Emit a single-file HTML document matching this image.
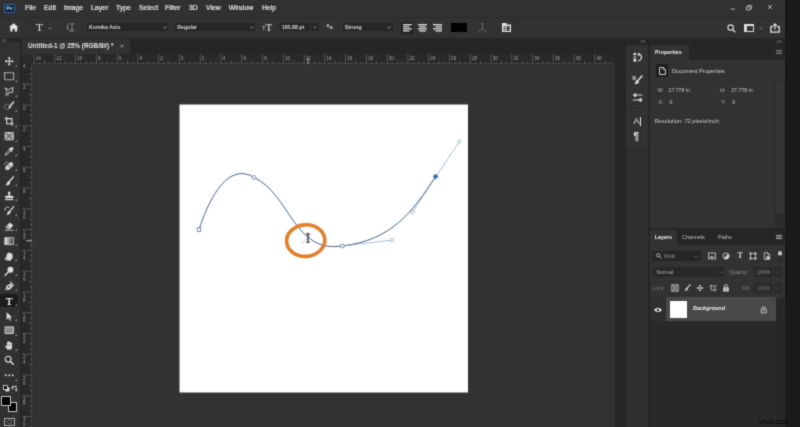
<!DOCTYPE html>
<html><head><meta charset="utf-8"><title>Photoshop</title>
<style>
*{margin:0;padding:0;box-sizing:border-box}
html,body{width:800px;height:427px;overflow:hidden;background:#1a1a1a;font-family:"Liberation Sans",sans-serif;}
#app{position:absolute;left:0;top:0;width:785px;height:427px;background:#262626;overflow:hidden;filter:url(#soft)}
.abs{position:absolute}
svg{position:absolute;overflow:visible}
.t{position:absolute;white-space:nowrap;color:#d2d2d2;line-height:1}
#menubar{left:0;top:0;width:785px;height:17.5px;background:#313132;border-bottom:1px solid #2d2d2d}
#menubar .t{font-size:6.9px;top:5.3px;color:#e2e2e2;-webkit-text-stroke:0.2px #e2e2e2}
#optbar{left:0;top:17.5px;width:785px;height:20px;background:#323232}
.dd{position:absolute;background:#262626;border-radius:1px;height:8.4px;top:5.4px}
.dd .t{font-size:5.3px;top:2.2px;left:2.2px;color:#d4d4d4;font-weight:bold}
.sep{position:absolute;top:3px;width:0.8px;height:14px;background:#2e2e2e}
#toolbar{left:0;top:42.4px;width:20.3px;height:385px;background:#313131}
#tabbar{left:22px;top:38.5px;width:593px;height:15px;background:#262626}
#tab{left:0;top:0;width:108px;height:15px;background:#323232}
#tab .t{font-size:6.4px;font-weight:bold;left:6px;top:4.4px;color:#e4e4e4}
#hruler{left:22px;top:53.5px;width:593px;height:10px;background:#292929;overflow:hidden}
#vruler{left:22px;top:63.5px;width:10px;height:364px;background:#292929;overflow:hidden}
.rl{position:absolute;font-size:4.6px;color:#a0a0a0;line-height:1;white-space:nowrap}
#work{left:32px;top:63.5px;width:583px;height:364px;background:#323232}
#canvas{left:148px;top:41.5px;width:288px;height:287px;background:#fff}
#iconcol{left:626px;top:45px;width:22px;height:382px;background:#2f2f2f}
.igrp{position:absolute;left:0;width:22px;background:#323232}
#props{left:650px;top:45px;width:135px;height:182.6px;background:#323232}
#layers{left:650px;top:230px;width:135px;height:197px;background:#292929}
.ptabbar{position:absolute;left:0;top:0;width:135px;height:15px;background:#262626}
.ptab{position:absolute;left:0;top:0;height:15px;background:#323232}
.ptabbar .t{font-size:5.4px;top:4.8px}
.pt{font-size:5.2px;color:#c8c8c8}
</style></head><body>
<svg width="0" height="0" style="position:absolute"><filter id="soft" x="0" y="0" width="100%" height="100%" color-interpolation-filters="sRGB"><feConvolveMatrix order="3" kernelMatrix="0.0225 0.105 0.0225 0.105 0.49 0.105 0.0225 0.105 0.0225" edgeMode="duplicate" preserveAlpha="true"/></filter></svg>
<div id="app">
<div id="menubar" class="abs">
<div class="abs" style="left:3.6px;top:3.7px;width:11.2px;height:9.4px;background:#0c1c2e;border:1px solid #2769a8;border-radius:1px"></div>
<div class="t" style="left:6px;top:5.6px;font-size:5.4px;color:#2f89d8;font-weight:bold">Ps</div>
<div class="t" style="left:25px">File</div>
<div class="t" style="left:44px">Edit</div>
<div class="t" style="left:64px">Image</div>
<div class="t" style="left:91px">Layer</div>
<div class="t" style="left:116px">Type</div>
<div class="t" style="left:139px">Select</div>
<div class="t" style="left:165px">Filter</div>
<div class="t" style="left:189px">3D</div>
<div class="t" style="left:206px">View</div>
<div class="t" style="left:228.7px">Window</div>
<div class="t" style="left:262px">Help</div>
<svg style="left:726px;top:2px" width="52" height="12" viewBox="0 0 52 12"><g stroke="#bdbdbd" stroke-width="0.9" fill="none"><path d="M4.5 7h4.5"/><path d="M20.5 4.8h3.6v3.2h-3.6z"/><path d="M22 4.8v-1.4h3.6v3.2h-1.5"/><path d="M42 3l4 4M46 3l-4 4"/></g></svg>
</div>
<div id="optbar" class="abs">
<svg style="left:9.4px;top:5.7px" width="9.4" height="8.5" viewBox="0 0 9 8"><path d="M4.5 0.2L0 4.1h1.2V8h2.3V5.4h2V8h2.3V4.1H9z" fill="#e6e6e6"/></svg>
<div class="sep" style="left:27.5px"></div>
<div class="t" style="left:36px;top:4.1px;font-family:'Liberation Serif',serif;font-size:11.4px;color:#e0e0e0">T</div>
<svg style="left:48px;top:9px" width="4" height="3" viewBox="0 0 4 3"><path d="M0.3 0.5L2 2.2 3.7 0.5" stroke="#aaa" stroke-width="0.7" fill="none"/></svg>
<svg style="left:66px;top:5.9px" width="9.4" height="8.600" viewBox="0 0 10 10"><g stroke="#a6a6a6" stroke-width="0.8" fill="none"><path d="M1.5 0.8v6.4M0.3 5.8l1.2 1.6 1.2-1.6"/><path d="M4 1h5M6.5 1v6.5M5.3 7.5h2.4"/><path d="M3 9.3h6.5"/></g></svg>
<div class="dd" style="left:86.7px;width:81.5px"><div class="t">Komika Axis</div><svg style="left:76.0px;top:3px" width="4" height="3" viewBox="0 0 4 3"><path d="M0.3 0.5L2 2.2 3.7 0.5" stroke="#b0b0b0" stroke-width="0.7" fill="none"/></svg></div>
<div class="dd" style="left:175px;width:80px"><div class="t">Regular</div><svg style="left:74.5px;top:3px" width="4" height="3" viewBox="0 0 4 3"><path d="M0.3 0.5L2 2.2 3.7 0.5" stroke="#b0b0b0" stroke-width="0.7" fill="none"/></svg></div>
<div class="t" style="left:262px;top:7.6px;font-family:'Liberation Serif',serif;font-size:6px;color:#d8d8d8">T</div>
<div class="t" style="left:265.4px;top:4.2px;font-family:'Liberation Serif',serif;font-size:11px;color:#e0e0e0">T</div>
<div class="dd" style="left:279.5px;width:30.5px"><div class="t">165.88 pt</div></div>
<div class="dd" style="left:311px;width:8px"><svg style="left:2px;top:3px" width="4" height="3" viewBox="0 0 4 3"><path d="M0.3 0.5L2 2.2 3.7 0.5" stroke="#b0b0b0" stroke-width="0.7" fill="none"/></svg></div>
<div class="t" style="left:326.5px;top:5.6px;font-size:5px;color:#d0d0d0;font-weight:bold">a</div>
<div class="t" style="left:329.6px;top:7.4px;font-size:5.6px;color:#d0d0d0;font-weight:bold">a</div>
<div class="dd" style="left:342.5px;width:50px"><div class="t">Strong</div><svg style="left:44.5px;top:3px" width="4" height="3" viewBox="0 0 4 3"><path d="M0.3 0.5L2 2.2 3.7 0.5" stroke="#b0b0b0" stroke-width="0.7" fill="none"/></svg></div>
<div class="sep" style="left:398px"></div>
<div class="abs" style="left:400.5px;top:4px;width:12.5px;height:12px;background:#202020;border-radius:1px"></div>
<svg style="left:402.5px;top:6px" width="9" height="8" viewBox="0 0 9 8"><g fill="#dcdcdc"><rect x="0" y="0.0" width="9" height="1.3"/><rect x="0" y="2.1" width="6.5" height="1.3"/><rect x="0" y="4.2" width="9" height="1.3"/><rect x="0" y="6.300000000000001" width="6.5" height="1.3"/></g></svg>
<svg style="left:417.5px;top:6px" width="9" height="8" viewBox="0 0 9 8"><g fill="#dcdcdc"><rect x="0.0" y="0.0" width="9" height="1.3"/><rect x="1.25" y="2.1" width="6.5" height="1.3"/><rect x="0.0" y="4.2" width="9" height="1.3"/><rect x="1.25" y="6.300000000000001" width="6.5" height="1.3"/></g></svg>
<svg style="left:432.5px;top:6px" width="9" height="8" viewBox="0 0 9 8"><g fill="#dcdcdc"><rect x="0" y="0.0" width="9" height="1.3"/><rect x="2.5" y="2.1" width="6.5" height="1.3"/><rect x="0" y="4.2" width="9" height="1.3"/><rect x="2.5" y="6.300000000000001" width="6.5" height="1.3"/></g></svg>
<div class="abs" style="left:451.2px;top:5px;width:16px;height:9.6px;background:#000"></div>
<svg style="left:477.5px;top:5px" width="9" height="10" viewBox="0 0 9 10"><g stroke="#6c6c6c" stroke-width="0.9" fill="none"><path d="M3 0.8h3M4.5 0.8v5.5"/><path d="M0.5 9.2c1.5-3.6 6.5-3.6 8 0"/></g></svg>
<div class="sep" style="left:494.5px"></div>
<svg style="left:501.5px;top:5.5px" width="9" height="9" viewBox="0 0 9 9"><path d="M0 0h4.5v1.6H9V9H0z" fill="#e2e2e2"/><g fill="#323232"><rect x="1.4" y="3.2" width="2.4" height="1"/><rect x="4.6" y="3.2" width="3" height="4.6"/><rect x="1.4" y="5" width="2.4" height="1"/><rect x="1.4" y="6.8" width="2.4" height="1"/></g></svg>
<div class="sep" style="left:517.5px"></div>
<svg style="left:727px;top:6px" width="9" height="9" viewBox="0 0 9 9"><circle cx="3.6" cy="3.6" r="2.7" stroke="#e0e0e0" stroke-width="1.1" fill="none"/><path d="M5.6 5.6L8.3 8.3" stroke="#e0e0e0" stroke-width="1.3"/></svg>
<svg style="left:744.2px;top:6px" width="10" height="8" viewBox="0 0 10 8"><rect x="0.5" y="0.5" width="9" height="7" stroke="#dcdcdc" stroke-width="1" fill="none"/><rect x="0.5" y="0.5" width="9" height="1.6" fill="#dcdcdc"/><rect x="0.5" y="0.5" width="2.4" height="7" fill="#dcdcdc"/></svg>
<svg style="left:759px;top:9px" width="4" height="3" viewBox="0 0 4 3"><path d="M0.3 0.5L2 2.2 3.7 0.5" stroke="#8a8a8a" stroke-width="0.7" fill="none"/></svg>
<svg style="left:770px;top:5px" width="10" height="10" viewBox="0 0 10 10"><path d="M3 3.6H0.8v5.6h8.4V3.6H7" stroke="#e0e0e0" stroke-width="1.3" fill="none"/><path d="M5 6.4V1.2M3.2 2.8L5 0.8l1.8 2" stroke="#e0e0e0" stroke-width="1.2" fill="none"/></svg>
</div>
<div class="abs" style="left:0;top:37.5px;width:20.3px;height:5px;background:#262626"></div>
<svg style="left:2px;top:39.2px" width="5" height="3" viewBox="0 0 5 3"><path d="M0.3 0.2L1.6 1.5 0.3 2.8M2.6 0.2L3.9 1.5 2.6 2.8" stroke="#b8b8b8" stroke-width="0.6" fill="none"/></svg>
<div id="toolbar" class="abs">
<svg style="left:4.30px;top:14.00px" width="10.4" height="10.4" viewBox="0 0 12 12"><g fill="#dcdcdc"><path d="M6 0.8L7.9 3H6.6V5.4H9V4.1L11.2 6 9 7.9V6.6H6.6V9H7.9L6 11.2 4.1 9H5.4V6.6H3V7.9L0.8 6 3 4.1V5.4H5.4V3H4.1z"/></g></svg>
<svg style="left:15.400px;top:22.40px" width="2" height="2" viewBox="0 0 2 2"><path d="M2 0V2H0z" fill="#9a9a9a"/></svg>
<svg style="left:4.30px;top:28.95px" width="10.4" height="10.4" viewBox="0 0 12 12"><rect x="0.8" y="2" width="10.4" height="8" fill="none" stroke="#ececec" stroke-width="1.2" stroke-dasharray="1.7 1"/></svg>
<svg style="left:15.400px;top:37.35px" width="2" height="2" viewBox="0 0 2 2"><path d="M2 0V2H0z" fill="#9a9a9a"/></svg>
<svg style="left:4.30px;top:43.90px" width="10.4" height="10.4" viewBox="0 0 12 12"><path d="M1.2 2.2L5.2 4.4 10.6 1.6 9.6 7.8 6 7 4.4 10.6 2.6 9.4 3.6 6.4z" fill="none" stroke="#dcdcdc" stroke-width="1"/><path d="M3.2 9.2l-1.6 2" stroke="#dcdcdc" stroke-width="0.9"/></svg>
<svg style="left:15.400px;top:52.30px" width="2" height="2" viewBox="0 0 2 2"><path d="M2 0V2H0z" fill="#9a9a9a"/></svg>
<svg style="left:4.30px;top:58.85px" width="10.4" height="10.4" viewBox="0 0 12 12"><ellipse cx="3.8" cy="6.8" rx="3" ry="3.2" fill="none" stroke="#dcdcdc" stroke-width="0.8" stroke-dasharray="1.3 0.9"/><path d="M11 1.2L6.8 6.4" stroke="#dcdcdc" stroke-width="1.6" stroke-linecap="round"/><path d="M6.9 6.2c-1 0-2 .9-1.7 2.6 1.3 0 2.7-.6 2.6-1.8z" fill="#dcdcdc"/></svg>
<svg style="left:15.400px;top:67.25px" width="2" height="2" viewBox="0 0 2 2"><path d="M2 0V2H0z" fill="#9a9a9a"/></svg>
<svg style="left:4.30px;top:73.80px" width="10.4" height="10.4" viewBox="0 0 12 12"><path d="M3 0.8V9H11.2M0.8 3H9V11.2" fill="none" stroke="#dcdcdc" stroke-width="1.3"/></svg>
<svg style="left:15.400px;top:82.20px" width="2" height="2" viewBox="0 0 2 2"><path d="M2 0V2H0z" fill="#9a9a9a"/></svg>
<svg style="left:4.30px;top:88.75px" width="10.4" height="10.4" viewBox="0 0 12 12"><rect x="1.300" y="1.800" width="9.400" height="8.400" fill="#a4a4a4" stroke="#dcdcdc" stroke-width="1"/><path d="M1.300 1.800l9.400 8.400M10.700 1.800l-9.400 8.400" stroke="#3c3c3c" stroke-width="0.900"/></svg>
<svg style="left:15.400px;top:97.15px" width="2" height="2" viewBox="0 0 2 2"><path d="M2 0V2H0z" fill="#9a9a9a"/></svg>
<svg style="left:4.30px;top:103.70px" width="10.4" height="10.4" viewBox="0 0 12 12"><path d="M10.4 1.6a1.5 1.5 0 0 0-2.2 0L6.9 2.9 6.2 2.2 5.2 3.2 8.8 6.8 9.8 5.8 9.1 5.1 10.4 3.8a1.5 1.5 0 0 0 0-2.2z" fill="#dcdcdc"/><path d="M6.2 4.6L2 8.8 1.4 10.6 3.2 10 7.4 5.8" fill="none" stroke="#dcdcdc" stroke-width="1"/></svg>
<svg style="left:15.400px;top:112.10px" width="2" height="2" viewBox="0 0 2 2"><path d="M2 0V2H0z" fill="#9a9a9a"/></svg>
<svg style="left:4.30px;top:118.65px" width="10.4" height="10.4" viewBox="0 0 12 12"><g transform="rotate(-45 6 6)"><rect x="0.6" y="3.4" width="10.8" height="5.2" rx="2.4" fill="#ececec"/><rect x="4" y="3.4" width="4" height="5.2" fill="#a8a8a8"/><path d="M2.2 3.4v5.2M9.8 3.4v5.2" stroke="#555" stroke-width="0.5"/></g><path d="M1 4.4a3 3 0 0 1 3.4-3.4" fill="none" stroke="#dcdcdc" stroke-width="0.7"/></svg>
<svg style="left:15.400px;top:127.05px" width="2" height="2" viewBox="0 0 2 2"><path d="M2 0V2H0z" fill="#9a9a9a"/></svg>
<svg style="left:4.30px;top:133.60px" width="10.4" height="10.4" viewBox="0 0 12 12"><path d="M10.8 1L6 6.6" stroke="#dcdcdc" stroke-width="1.7" stroke-linecap="round"/><path d="M5.9 6.1c-1.4-.2-2.4.8-2.6 2.2-.1.9-.8 1.6-1.8 1.8 1.6 1.2 4.2.6 5.2-1 .6-1 .4-2.2-.8-3z" fill="#dcdcdc"/></svg>
<svg style="left:15.400px;top:142.00px" width="2" height="2" viewBox="0 0 2 2"><path d="M2 0V2H0z" fill="#9a9a9a"/></svg>
<svg style="left:4.30px;top:148.55px" width="10.4" height="10.4" viewBox="0 0 12 12"><path d="M4.6 1.4a1.6 1.6 0 0 1 2.8 0c.4 1-.4 2-.6 3-.1.6.2 1 .8 1h1.8c.9 0 1.4.6 1.4 1.4V8H1.200V6.800c0-.8.5-1.400 1.400-1.400h1.800c.6 0 .9-.4.8-1-.2-1-1-2-.6-3z" fill="#dcdcdc"/><rect x="1.200" y="9" width="9.600" height="1.600" fill="#dcdcdc"/></svg>
<svg style="left:15.400px;top:156.95px" width="2" height="2" viewBox="0 0 2 2"><path d="M2 0V2H0z" fill="#9a9a9a"/></svg>
<svg style="left:4.30px;top:163.50px" width="10.4" height="10.4" viewBox="0 0 12 12"><path d="M11 1L6.6 6.200" stroke="#dcdcdc" stroke-width="1.600" stroke-linecap="round"/><path d="M6.500 5.800c-1.300-.2-2.200.7-2.400 2-.1.800-.7 1.500-1.600 1.600 1.400 1.100 3.800.6 4.700-.9.600-.9.400-2-.700-2.700z" fill="#dcdcdc"/><path d="M1 4.400a3.200 3.200 0 0 1 5.200-2.400" fill="none" stroke="#dcdcdc" stroke-width="0.900"/><path d="M0.200 3.400L1 5.200 2.600 4z" fill="#dcdcdc"/></svg>
<svg style="left:15.400px;top:171.90px" width="2" height="2" viewBox="0 0 2 2"><path d="M2 0V2H0z" fill="#9a9a9a"/></svg>
<svg style="left:4.30px;top:178.45px" width="10.4" height="10.4" viewBox="0 0 12 12"><path d="M6.800 1.600L10.800 5.200 6.600 9.400H4L1.600 7z" fill="#dcdcdc"/><path d="M1.600 7L4 9.400h2.600L4.400 4.200z" fill="#9a9a9a"/><path d="M1 10.600h10" stroke="#dcdcdc" stroke-width="0.900"/></svg>
<svg style="left:15.400px;top:186.85px" width="2" height="2" viewBox="0 0 2 2"><path d="M2 0V2H0z" fill="#9a9a9a"/></svg>
<svg style="left:4.30px;top:193.40px" width="10.4" height="10.4" viewBox="0 0 12 12"><defs><linearGradient id="gg" x1="0" x2="1"><stop offset="0" stop-color="#e6e6e6"/><stop offset="1" stop-color="#3a3a3a"/></linearGradient></defs><rect x="1" y="2" width="10" height="8" fill="url(#gg)" stroke="#dcdcdc" stroke-width="0.900"/></svg>
<svg style="left:15.400px;top:201.80px" width="2" height="2" viewBox="0 0 2 2"><path d="M2 0V2H0z" fill="#9a9a9a"/></svg>
<svg style="left:4.30px;top:208.35px" width="10.4" height="10.4" viewBox="0 0 12 12"><path d="M3 11L2.600 7.600 3.200 3.400c.2-.9 1.300-.9 1.400 0L4.800 2.200c.2-.9 1.400-.9 1.500 0l.3.400c.2-.8 1.300-.8 1.500 0l.2.700c.3-.6 1.300-.5 1.400.3L10 7c0 1.200-.6 2-1.400 2.600L8 11z" fill="#dcdcdc"/><path d="M2.600 7.600L1.200 9.800" stroke="#dcdcdc" stroke-width="1.200" stroke-linecap="round"/></svg>
<svg style="left:15.400px;top:216.75px" width="2" height="2" viewBox="0 0 2 2"><path d="M2 0V2H0z" fill="#9a9a9a"/></svg>
<svg style="left:4.30px;top:223.30px" width="10.4" height="10.4" viewBox="0 0 12 12"><circle cx="7.400" cy="4.400" r="3.400" fill="#dcdcdc"/><path d="M5 7L1.400 10.800" stroke="#dcdcdc" stroke-width="1.700" stroke-linecap="round"/></svg>
<svg style="left:15.400px;top:231.70px" width="2" height="2" viewBox="0 0 2 2"><path d="M2 0V2H0z" fill="#9a9a9a"/></svg>
<svg style="left:4.30px;top:238.25px" width="10.4" height="10.4" viewBox="0 0 12 12"><path d="M1.400 10.600L3 5.400 7.400 2.800 10.200 6 7 9.800z" fill="#dcdcdc"/><circle cx="5.800" cy="6.600" r="1" fill="#313131"/><path d="M1.400 10.600L5.200 7.200" stroke="#313131" stroke-width="0.600"/><path d="M7.600 1.400L11 5" stroke="#dcdcdc" stroke-width="1.300" stroke-linecap="round"/></svg>
<svg style="left:15.400px;top:246.65px" width="2" height="2" viewBox="0 0 2 2"><path d="M2 0V2H0z" fill="#9a9a9a"/></svg>
<div class="abs" style="left:0;top:251.80px;width:18.200px;height:13.200px;background:#1c1c1c;border-radius:1px"></div>
<svg style="left:4.30px;top:253.20px" width="10.4" height="10.4" viewBox="0 0 12 12"><path transform="translate(6 6) scale(0.86) translate(-6 -6)" d="M1.600 1.600h8.800v2.600H9.600C9.500 3.200 9.200 2.800 8.200 2.800H7v6.400c0 .8.300 1 1.200 1v.8H3.800v-.8c.9 0 1.200-.2 1.200-1V2.800H3.800c-1 0-1.300.4-1.400 1.400H1.600z" fill="#f2f2f2"/></svg>
<svg style="left:15.400px;top:261.60px" width="2" height="2" viewBox="0 0 2 2"><path d="M2 0V2H0z" fill="#9a9a9a"/></svg>
<svg style="left:4.30px;top:268.15px" width="10.4" height="10.4" viewBox="0 0 12 12"><path d="M3 1.200L9.400 7.400H6.600L8.200 10.600 6.800 11.200 5.300 8 3 10z" fill="#dcdcdc"/></svg>
<svg style="left:15.400px;top:276.55px" width="2" height="2" viewBox="0 0 2 2"><path d="M2 0V2H0z" fill="#9a9a9a"/></svg>
<svg style="left:4.30px;top:283.10px" width="10.4" height="10.4" viewBox="0 0 12 12"><rect x="1.200" y="2.200" width="9.600" height="7.600" fill="#8a8a8a" stroke="#dcdcdc" stroke-width="1"/></svg>
<svg style="left:15.400px;top:291.50px" width="2" height="2" viewBox="0 0 2 2"><path d="M2 0V2H0z" fill="#9a9a9a"/></svg>
<svg style="left:4.30px;top:298.05px" width="10.4" height="10.4" viewBox="0 0 12 12"><path d="M3.600 11L1.400 7.400c-.5-.9.500-1.500 1.100-.8l.9 1V2.800c0-.9 1.300-.9 1.400 0V1.900c.1-.9 1.400-.9 1.500 0v.7c.2-.8 1.400-.8 1.500 0v.9c.2-.7 1.300-.6 1.400.2L9.400 7.600C9.400 9 9 10 8.400 11z" fill="#dcdcdc"/><path d="M4.800 4.600v2.600M6.300 4.400v2.800M7.800 4.800v2.400" stroke="#666" stroke-width="0.400"/></svg>
<svg style="left:15.400px;top:306.45px" width="2" height="2" viewBox="0 0 2 2"><path d="M2 0V2H0z" fill="#9a9a9a"/></svg>
<svg style="left:4.30px;top:313.00px" width="10.4" height="10.4" viewBox="0 0 12 12"><circle cx="4.800" cy="4.800" r="3.400" fill="none" stroke="#dcdcdc" stroke-width="1.300"/><path d="M7.400 7.400L10.800 10.800" stroke="#dcdcdc" stroke-width="1.700" stroke-linecap="round"/></svg>
<svg style="left:4.30px;top:327.95px" width="10.4" height="10.4" viewBox="0 0 12 12"><circle cx="2" cy="6" r="1.100" fill="#dcdcdc"/><circle cx="6" cy="6" r="1.100" fill="#dcdcdc"/><circle cx="10" cy="6" r="1.100" fill="#dcdcdc"/></svg>
<svg style="left:15.400px;top:336.35px" width="2" height="2" viewBox="0 0 2 2"><path d="M2 0V2H0z" fill="#9a9a9a"/></svg>
<svg style="left:2.500px;top:343.10px" width="7" height="7" viewBox="0 0 7 7"><rect x="2.400" y="2.400" width="4" height="4" fill="#e6e6e6"/><rect x="0.500" y="0.500" width="4" height="4" fill="#111" stroke="#dcdcdc" stroke-width="0.800"/></svg>
<svg style="left:11px;top:343.10px" width="7" height="7" viewBox="0 0 7 7"><path d="M1.400 3V1.400H5.200V5.400" fill="none" stroke="#dcdcdc" stroke-width="0.900"/><path d="M0 2.600h2.800L1.400 4.400zM3.800 4.600h2.800L5.200 6.600z" fill="#dcdcdc"/></svg>
<div class="abs" style="left:7.500px;top:359.80px;width:9.600px;height:9.600px;background:#000;border:1px solid #c4c4c4"></div>
<div class="abs" style="left:1px;top:353.60px;width:9.600px;height:10px;background:#000;border:1px solid #c4c4c4"></div>
<svg style="left:4px;top:376.10px" width="11" height="8" viewBox="0 0 11 8"><rect x="0.500" y="0.500" width="10" height="7" fill="none" stroke="#b4b4b4" stroke-width="0.900"/><circle cx="5.500" cy="4" r="2" fill="none" stroke="#b4b4b4" stroke-width="0.800" stroke-dasharray="0.8 0.6"/></svg>
</div>
<div id="tabbar" class="abs"><div id="tab" class="abs"><div class="t">Untitled-1 @ 25% (RGB/8#) *</div>
<svg style="left:98px;top:5.5px" width="4" height="4" viewBox="0 0 4 4"><path d="M0.4 0.4l3.2 3.2M3.6 0.4L0.4 3.6" stroke="#a8a8a8" stroke-width="0.7"/></svg>
</div></div>
<div id="hruler" class="abs">
<svg style="left:0;top:0" width="593" height="10" viewBox="0 0 593 10"><g stroke="#707070" stroke-width="0.6"><path d="M12.11 0V10"/><path d="M17.30 8V10"/><path d="M22.50 6.6V10"/><path d="M27.69 8V10"/><path d="M32.88 0V10"/><path d="M38.07 8V10"/><path d="M43.27 6.6V10"/><path d="M48.46 8V10"/><path d="M53.65 0V10"/><path d="M58.84 8V10"/><path d="M64.03 6.6V10"/><path d="M69.23 8V10"/><path d="M74.42 0V10"/><path d="M79.61 8V10"/><path d="M84.81 6.6V10"/><path d="M90.00 8V10"/><path d="M95.19 0V10"/><path d="M100.38 8V10"/><path d="M105.58 6.6V10"/><path d="M110.77 8V10"/><path d="M115.96 0V10"/><path d="M121.15 8V10"/><path d="M126.34 6.6V10"/><path d="M131.54 8V10"/><path d="M136.73 0V10"/><path d="M141.92 8V10"/><path d="M147.12 6.6V10"/><path d="M152.31 8V10"/><path d="M157.50 0V10"/><path d="M162.69 8V10"/><path d="M167.88 6.6V10"/><path d="M173.08 8V10"/><path d="M178.27 0V10"/><path d="M183.46 8V10"/><path d="M188.66 6.6V10"/><path d="M193.85 8V10"/><path d="M199.04 0V10"/><path d="M204.23 8V10"/><path d="M209.43 6.6V10"/><path d="M214.62 8V10"/><path d="M219.81 0V10"/><path d="M225.00 8V10"/><path d="M230.19 6.6V10"/><path d="M235.39 8V10"/><path d="M240.58 0V10"/><path d="M245.77 8V10"/><path d="M250.97 6.6V10"/><path d="M256.16 8V10"/><path d="M261.35 0V10"/><path d="M266.54 8V10"/><path d="M271.74 6.6V10"/><path d="M276.93 8V10"/><path d="M282.12 0V10"/><path d="M287.31 8V10"/><path d="M292.50 6.6V10"/><path d="M297.70 8V10"/><path d="M302.89 0V10"/><path d="M308.08 8V10"/><path d="M313.27 6.6V10"/><path d="M318.47 8V10"/><path d="M323.66 0V10"/><path d="M328.85 8V10"/><path d="M334.04 6.6V10"/><path d="M339.24 8V10"/><path d="M344.43 0V10"/><path d="M349.62 8V10"/><path d="M354.81 6.6V10"/><path d="M360.01 8V10"/><path d="M365.20 0V10"/><path d="M370.39 8V10"/><path d="M375.59 6.6V10"/><path d="M380.78 8V10"/><path d="M385.97 0V10"/><path d="M391.16 8V10"/><path d="M396.36 6.6V10"/><path d="M401.55 8V10"/><path d="M406.74 0V10"/><path d="M411.93 8V10"/><path d="M417.12 6.6V10"/><path d="M422.32 8V10"/><path d="M427.51 0V10"/><path d="M432.70 8V10"/><path d="M437.89 6.6V10"/><path d="M443.09 8V10"/><path d="M448.28 0V10"/><path d="M453.47 8V10"/><path d="M458.67 6.6V10"/><path d="M463.86 8V10"/><path d="M469.05 0V10"/><path d="M474.24 8V10"/><path d="M479.44 6.6V10"/><path d="M484.63 8V10"/><path d="M489.82 0V10"/><path d="M495.01 8V10"/><path d="M500.20 6.6V10"/><path d="M505.40 8V10"/><path d="M510.59 0V10"/><path d="M515.78 8V10"/><path d="M520.97 6.6V10"/><path d="M526.17 8V10"/><path d="M531.36 0V10"/><path d="M536.55 8V10"/><path d="M541.75 6.6V10"/><path d="M546.94 8V10"/><path d="M552.13 0V10"/><path d="M557.32 8V10"/><path d="M562.51 6.6V10"/><path d="M567.71 8V10"/><path d="M572.90 0V10"/><path d="M578.09 8V10"/><path d="M583.28 6.6V10"/><path d="M588.48 8V10"/></g><path d="M10 9.7H593" stroke="#555" stroke-width="0.6"/><g stroke="#4a4a4a" stroke-width="0.5" stroke-dasharray="1 1"><path d="M2 5H10M5 1V10"/></g><path d="M286 4V10" stroke="#eee" stroke-width="0.7"/></svg>
<div class="rl" style="left:13.71px;top:3.2px">14</div>
<div class="rl" style="left:34.48px;top:3.2px">12</div>
<div class="rl" style="left:55.25px;top:3.2px">10</div>
<div class="rl" style="left:76.02px;top:3.2px">8</div>
<div class="rl" style="left:96.79px;top:3.2px">6</div>
<div class="rl" style="left:117.56px;top:3.2px">4</div>
<div class="rl" style="left:138.33px;top:3.2px">2</div>
<div class="rl" style="left:159.10px;top:3.2px">0</div>
<div class="rl" style="left:179.87px;top:3.2px">2</div>
<div class="rl" style="left:200.64px;top:3.2px">4</div>
<div class="rl" style="left:221.41px;top:3.2px">6</div>
<div class="rl" style="left:242.18px;top:3.2px">8</div>
<div class="rl" style="left:262.95px;top:3.2px">10</div>
<div class="rl" style="left:283.72px;top:3.2px">12</div>
<div class="rl" style="left:304.49px;top:3.2px">14</div>
<div class="rl" style="left:325.26px;top:3.2px">16</div>
<div class="rl" style="left:346.03px;top:3.2px">18</div>
<div class="rl" style="left:366.80px;top:3.2px">20</div>
<div class="rl" style="left:387.57px;top:3.2px">22</div>
<div class="rl" style="left:408.34px;top:3.2px">24</div>
<div class="rl" style="left:429.11px;top:3.2px">26</div>
<div class="rl" style="left:449.88px;top:3.2px">28</div>
<div class="rl" style="left:470.65px;top:3.2px">30</div>
<div class="rl" style="left:491.42px;top:3.2px">32</div>
<div class="rl" style="left:512.19px;top:3.2px">34</div>
<div class="rl" style="left:532.96px;top:3.2px">36</div>
<div class="rl" style="left:553.73px;top:3.2px">38</div>
<div class="rl" style="left:574.50px;top:3.2px">40</div>
</div>
<div id="vruler" class="abs">
<svg style="left:0;top:0" width="10" height="364" viewBox="0 0 10 364"><g stroke="#707070" stroke-width="0.6"><path d="M8 4.65H10"/><path d="M6.6 9.84H10"/><path d="M8 15.04H10"/><path d="M0 20.23H10"/><path d="M8 25.42H10"/><path d="M6.6 30.62H10"/><path d="M8 35.81H10"/><path d="M0 41.00H10"/><path d="M8 46.19H10"/><path d="M6.6 51.38H10"/><path d="M8 56.58H10"/><path d="M0 61.77H10"/><path d="M8 66.96H10"/><path d="M6.6 72.16H10"/><path d="M8 77.35H10"/><path d="M0 82.54H10"/><path d="M8 87.73H10"/><path d="M6.6 92.92H10"/><path d="M8 98.12H10"/><path d="M0 103.31H10"/><path d="M8 108.50H10"/><path d="M6.6 113.69H10"/><path d="M8 118.89H10"/><path d="M0 124.08H10"/><path d="M8 129.27H10"/><path d="M6.6 134.47H10"/><path d="M8 139.66H10"/><path d="M0 144.85H10"/><path d="M8 150.04H10"/><path d="M6.6 155.24H10"/><path d="M8 160.43H10"/><path d="M0 165.62H10"/><path d="M8 170.81H10"/><path d="M6.6 176.00H10"/><path d="M8 181.20H10"/><path d="M0 186.39H10"/><path d="M8 191.58H10"/><path d="M6.6 196.78H10"/><path d="M8 201.97H10"/><path d="M0 207.16H10"/><path d="M8 212.35H10"/><path d="M6.6 217.54H10"/><path d="M8 222.74H10"/><path d="M0 227.93H10"/><path d="M8 233.12H10"/><path d="M6.6 238.31H10"/><path d="M8 243.51H10"/><path d="M0 248.70H10"/><path d="M8 253.89H10"/><path d="M6.6 259.09H10"/><path d="M8 264.28H10"/><path d="M0 269.47H10"/><path d="M8 274.66H10"/><path d="M6.6 279.86H10"/><path d="M8 285.05H10"/><path d="M0 290.24H10"/><path d="M8 295.43H10"/><path d="M6.6 300.62H10"/><path d="M8 305.82H10"/><path d="M0 311.01H10"/><path d="M8 316.20H10"/><path d="M6.6 321.39H10"/><path d="M8 326.59H10"/><path d="M0 331.78H10"/><path d="M8 336.97H10"/><path d="M6.6 342.17H10"/><path d="M8 347.36H10"/><path d="M0 352.55H10"/><path d="M8 357.74H10"/><path d="M6.6 362.94H10"/></g><path d="M9.7 0V364" stroke="#555" stroke-width="0.6"/><path d="M4 176.8H10" stroke="#eee" stroke-width="0.7"/></svg>
<div class="rl" style="left:0.8px;top:1.86px;width:3px;text-align:center">4</div>
<div class="rl" style="left:0.8px;top:22.63px;width:3px;text-align:center">2</div>
<div class="rl" style="left:0.8px;top:43.40px;width:3px;text-align:center">0</div>
<div class="rl" style="left:0.8px;top:64.17px;width:3px;text-align:center">2</div>
<div class="rl" style="left:0.8px;top:84.94px;width:3px;text-align:center">4</div>
<div class="rl" style="left:0.8px;top:105.71px;width:3px;text-align:center">6</div>
<div class="rl" style="left:0.8px;top:126.48px;width:3px;text-align:center">8</div>
<div class="rl" style="left:0.8px;top:147.25px;width:3px;text-align:center">1</div>
<div class="rl" style="left:0.8px;top:152.05px;width:3px;text-align:center">0</div>
<div class="rl" style="left:0.8px;top:168.02px;width:3px;text-align:center">1</div>
<div class="rl" style="left:0.8px;top:172.82px;width:3px;text-align:center">2</div>
<div class="rl" style="left:0.8px;top:188.79px;width:3px;text-align:center">1</div>
<div class="rl" style="left:0.8px;top:193.59px;width:3px;text-align:center">4</div>
<div class="rl" style="left:0.8px;top:209.56px;width:3px;text-align:center">1</div>
<div class="rl" style="left:0.8px;top:214.36px;width:3px;text-align:center">6</div>
<div class="rl" style="left:0.8px;top:230.33px;width:3px;text-align:center">1</div>
<div class="rl" style="left:0.8px;top:235.13px;width:3px;text-align:center">8</div>
<div class="rl" style="left:0.8px;top:251.10px;width:3px;text-align:center">2</div>
<div class="rl" style="left:0.8px;top:255.90px;width:3px;text-align:center">0</div>
<div class="rl" style="left:0.8px;top:271.87px;width:3px;text-align:center">2</div>
<div class="rl" style="left:0.8px;top:276.67px;width:3px;text-align:center">2</div>
<div class="rl" style="left:0.8px;top:292.64px;width:3px;text-align:center">2</div>
<div class="rl" style="left:0.8px;top:297.44px;width:3px;text-align:center">4</div>
<div class="rl" style="left:0.8px;top:313.41px;width:3px;text-align:center">2</div>
<div class="rl" style="left:0.8px;top:318.21px;width:3px;text-align:center">6</div>
<div class="rl" style="left:0.8px;top:334.18px;width:3px;text-align:center">2</div>
<div class="rl" style="left:0.8px;top:338.98px;width:3px;text-align:center">8</div>
<div class="rl" style="left:0.8px;top:354.95px;width:3px;text-align:center">3</div>
<div class="rl" style="left:0.8px;top:359.75px;width:3px;text-align:center">0</div>
</div>
<div id="work" class="abs"><div id="canvas" class="abs"></div>
<svg style="left:-32px;top:-63.5px" width="800" height="427" viewBox="0 0 800 427"><rect x="179.5" y="104.5" width="288.5" height="288" fill="#fff"/><g fill="none" stroke="#446688" stroke-width="1"><path d="M199 229.7C209.4 197.5 228.3 161.8 254 177.4C290.5 194.6 293.6 253.7 342.2 246C391.8 240.1 412.4 212.1 435.6 176.5"/></g><g fill="none" stroke="#6f93b8" stroke-width="0.6"><path d="M342.2 246L391.8 240.1"/><path d="M412.4 212.1L459.3 141.6"/></g><rect x="197.2" y="227.9" width="3.6" height="3.6" fill="#fff" stroke="#446688" stroke-width="0.7"/><circle cx="254" cy="177.4" r="1.9" fill="#fff" stroke="#446688" stroke-width="0.7"/><circle cx="342.2" cy="246" r="1.9" fill="#fff" stroke="#446688" stroke-width="0.7"/><circle cx="391.8" cy="240.1" r="1.7" fill="#fff" stroke="#6f93b8" stroke-width="0.6"/><circle cx="412.4" cy="212.1" r="1.7" fill="#fff" stroke="#6f93b8" stroke-width="0.6"/><circle cx="459.3" cy="141.6" r="1.7" fill="#fff" stroke="#6f93b8" stroke-width="0.6"/><rect x="433.6" y="174.5" width="4" height="4" fill="#2f6fb4" transform="rotate(45 435.6 176.5)"/><ellipse cx="305.7" cy="240.6" rx="19.1" ry="15.8" fill="none" stroke="#e0802e" stroke-width="3.6" transform="rotate(-4 305.7 240.6)"/><g stroke="#151515" stroke-width="1.1" fill="none"><path d="M308 233.800V242.400M306.4 233.6C307.2 233.6 307.6 234 308 234.4C308.4 234 308.800 233.6 309.600 233.6M306.400 242.400C307.200 242.400 307.600 242 308 241.600C308.400 242 308.800 242.400 309.600 242.400"/></g><path d="M301.500 243.500L312.500 234" stroke="#7a7a7a" stroke-width="0.7" stroke-dasharray="1.2 0.8" fill="none"/></svg>
</div>
<div id="iconcol" class="abs">
<div class="igrp" style="top:0;height:21.7px"></div>
<div class="igrp" style="top:22.7px;height:39px"></div>
<div class="igrp" style="top:64px;height:37.8px"></div>
<svg style="left:6.10px;top:7.10px" width="11" height="11" viewBox="0 0 12 12"><g fill="#dcdcdc"><rect x="1.600" y="1" width="3" height="2.200"/><rect x="1.600" y="4" width="3" height="2.200" fill="#9a9a9a"/><rect x="1.600" y="7" width="3" height="3.600"/></g><path d="M7 2.600C10 2.400 11 5.200 9.800 7.600 9.100 8.900 8 9.600 6.400 9.800" fill="none" stroke="#dcdcdc" stroke-width="1.400"/><path d="M5.400 2.800L8.200 0.600 8.400 4.400z" fill="#dcdcdc"/></svg>
<svg style="left:6.10px;top:29.80px" width="11" height="11" viewBox="0 0 12 12"><path d="M10.800 1.200L6.600 5.800" stroke="#dcdcdc" stroke-width="1.700" stroke-linecap="round"/><path d="M6.400 5.600c-1.300-.2-2.300.7-2.500 2-.1.900-.8 1.600-1.700 1.700 1.500 1.200 4 .6 5-.9.600-1 .400-2.100-.800-2.800z" fill="#dcdcdc"/><g fill="#dcdcdc"><rect x="0.800" y="1" width="1.100" height="4.600"/><rect x="2.800" y="1" width="1.100" height="4.600"/></g></svg>
<svg style="left:6.10px;top:46.90px" width="11" height="11" viewBox="0 0 12 12"><g stroke="#dcdcdc" stroke-width="1.100"><path d="M0.800 3.400H11.200M0.800 8.600H11.200"/></g><rect x="2.200" y="1.600" width="2.400" height="3.600" fill="#dcdcdc"/><path d="M10 6.400V10.800L6.600 8.600z" fill="#dcdcdc"/><rect x="8.600" y="6.600" width="1.600" height="4" fill="#dcdcdc"/></svg>
<div class="t" style="left:7.399999999999977px;top:72px;font-size:9px;color:#e0e0e0">A</div><div class="abs" style="left:14.200000000000045px;top:71.6px;width:0.9px;height:9.6px;background:#e0e0e0"></div>
<div class="t" style="left:7.600000000000023px;top:86.6px;font-size:10px;color:#e0e0e0;font-weight:bold">¶</div>
</div>
<svg style="left:640.5px;top:39.5px" width="5" height="3" viewBox="0 0 5 3"><path d="M1.6 0.2L0.3 1.5 1.6 2.8M3.9 0.2L2.6 1.5 3.9 2.8" stroke="#b8b8b8" stroke-width="0.6" fill="none"/></svg>
<svg style="left:777px;top:39.5px" width="5" height="3" viewBox="0 0 5 3"><path d="M0.3 0.2L1.6 1.5 0.3 2.8M2.6 0.2L3.9 1.5 2.6 2.8" stroke="#b8b8b8" stroke-width="0.6" fill="none"/></svg>
<div id="props" class="abs">
<div class="ptabbar"><div class="ptab" style="width:38.5px"></div><div class="t" style="left:5px;color:#f0f0f0;font-weight:bold">Properties</div>
<svg style="left:125.5px;top:5px" width="6" height="4" viewBox="0 0 6 4"><path d="M0 0.400H6M0 2H6M0 3.600H6" stroke="#8c8c8c" stroke-width="0.800"/></svg></div>
<div class="abs" style="left:5.600px;top:19.300px;width:12.400px;height:12.400px;background:#1e1e1e;border-radius:1px"></div>
<svg style="left:8.600px;top:21.600px" width="7" height="8" viewBox="0 0 7 8"><path d="M0.600 0.500H4.200L6.400 2.700V7.500H0.600z" fill="none" stroke="#e0e0e0" stroke-width="0.900"/><path d="M4.200 0.500V2.700H6.400" fill="none" stroke="#e0e0e0" stroke-width="0.700"/></svg>
<div class="t pt" style="left:22px;top:24.200px;font-size:5.600px;color:#d0d0d0">Document Properties</div>
<div class="abs" style="left:125px;top:36px;width:10px;height:146.600px;background:#2b2b2b"></div>
<div class="abs" style="left:125.600px;top:36.500px;width:8.800px;height:131px;background:#353535;border-radius:1px"></div>
<div class="t pt" style="left:7.5px;top:42.5px;color:#b4b4b4">W:</div><div class="t pt" style="left:18.5px;top:42.5px">27.778 in</div>
<div class="t pt" style="left:70.2px;top:42.5px;color:#b4b4b4">H:</div><div class="t pt" style="left:81.2px;top:42.5px">27.778 in</div>
<div class="t pt" style="left:8.5px;top:55px;color:#b4b4b4">X:</div><div class="t pt" style="left:19.5px;top:55px">0</div>
<div class="t pt" style="left:71.2px;top:55px;color:#b4b4b4">Y:</div><div class="t pt" style="left:82.2px;top:55px">0</div>
<div class="t pt" style="left:4.400px;top:73.600px;font-size:5.7px">Resolution: 72 pixels/inch</div>
</div>
<div id="layers" class="abs">
<div class="ptabbar"><div class="ptab" style="width:26.700px"></div><div class="t" style="left:4.700px;color:#f0f0f0;font-weight:bold">Layers</div><div class="t" style="left:32px;color:#bcbcbc">Channels</div><div class="t" style="left:68px;color:#bcbcbc">Paths</div>
<svg style="left:125.500px;top:5px" width="6" height="4" viewBox="0 0 6 4"><path d="M0 0.400H6M0 2H6M0 3.600H6" stroke="#c0c0c0" stroke-width="0.800"/></svg></div>
<div class="abs" style="left:0;top:15px;width:135px;height:52.600px;background:#323232"></div>
<div class="abs" style="left:2px;top:21px;width:48.800px;height:10.300px;background:#262626;border-radius:1px"></div>
<svg style="left:6.200px;top:23.200px" width="6" height="6" viewBox="0 0 6 6"><circle cx="2.300" cy="2.300" r="1.700" fill="none" stroke="#c4c4c4" stroke-width="0.800"/><path d="M3.600 3.600L5.600 5.600" stroke="#c4c4c4" stroke-width="0.900"/></svg>
<div class="t pt" style="left:14.200px;top:23.700px;color:#9c9c9c">Kind</div>
<svg style="left:44px;top:25px" width="4" height="3" viewBox="0 0 4 3"><path d="M0.300 0.500L2 2.200 3.700 0.500" stroke="#777" stroke-width="0.700" fill="none"/></svg>
<svg style="left:57.80px;top:22.20px" width="8" height="8" viewBox="0 0 12 12"><rect x="1" y="1.600" width="10" height="8.800" fill="none" stroke="#d2d2d2" stroke-width="1.300"/><path d="M2.400 8.800L5 5.600 6.800 7.600 8 6.400 9.600 8.800z" fill="#d2d2d2"/></svg>
<svg style="left:71.80px;top:22.20px" width="8" height="8" viewBox="0 0 12 12"><circle cx="6" cy="6" r="4.600" fill="none" stroke="#d2d2d2" stroke-width="1.300"/><path d="M6 1.400A4.600 4.600 0 0 1 6 10.600z" fill="#d2d2d2" transform="rotate(45 6 6)"/></svg>
<div class="t" style="left:87.60000000000002px;top:22.19999999999999px;font-family:'Liberation Serif',serif;font-size:8px;font-weight:bold;color:#d2d2d2">T</div>
<svg style="left:99.00px;top:22.20px" width="8" height="8" viewBox="0 0 12 12"><rect x="2.400" y="2.400" width="7.200" height="7.200" fill="none" stroke="#d2d2d2" stroke-width="1.100"/><g fill="#d2d2d2"><rect x="0.800" y="0.800" width="3" height="3"/><rect x="8.200" y="0.800" width="3" height="3"/><rect x="0.800" y="8.200" width="3" height="3"/><rect x="8.200" y="8.200" width="3" height="3"/></g></svg>
<svg style="left:113.00px;top:22.20px" width="8" height="8" viewBox="0 0 12 12"><path d="M2 1H7L10 4V11H2z" fill="none" stroke="#d2d2d2" stroke-width="1.200"/><rect x="5" y="6.400" width="5" height="4.600" fill="#d2d2d2"/><path d="M7 1V4H10" fill="none" stroke="#d2d2d2" stroke-width="1"/></svg>
<div class="abs" style="left:127.60000000000002px;top:21.19999999999999px;width:4.800px;height:4.600px;border-radius:50%;background:#c8c8c8"></div>
<div class="abs" style="left:128.5px;top:25px;width:3.600px;height:7px;border-radius:1.500px;background:#2a2a2a"></div>
<div class="abs" style="left:2px;top:37.400px;width:72.200px;height:10px;background:#282828;border-radius:1px"></div>
<div class="t pt" style="left:6.500px;top:40px;color:#a8a8a8">Normal</div>
<svg style="left:68.500px;top:41.200px" width="4" height="3" viewBox="0 0 4 3"><path d="M0.300 0.500L2 2.200 3.700 0.500" stroke="#666" stroke-width="0.700" fill="none"/></svg>
<div class="t pt" style="left:79px;top:40px;color:#8c8c8c">Opacity:</div>
<div class="abs" style="left:104px;top:37.400px;width:19.400px;height:10px;background:#2a2a2a;border-radius:1px"></div>
<div class="t pt" style="left:107px;top:40px;color:#8c8c8c">100%</div>
<div class="abs" style="left:124.600px;top:37.400px;width:7.400px;height:10px;background:#2a2a2a;border-radius:1px"></div>
<svg style="left:126.300px;top:41.200px" width="4" height="3" viewBox="0 0 4 3"><path d="M0.300 0.500L2 2.200 3.700 0.500" stroke="#555" stroke-width="0.700" fill="none"/></svg>
<div class="t pt" style="left:2.300px;top:55.800px;color:#777">Lock:</div>
<svg style="left:21.00px;top:54.30px" width="8" height="8" viewBox="0 0 12 12"><rect x="1.200" y="1.200" width="9.600" height="9.600" fill="none" stroke="#d2d2d2" stroke-width="1.100"/><g fill="#d2d2d2"><rect x="2.400" y="2.400" width="2.400" height="2.400"/><rect x="7.200" y="2.400" width="2.400" height="2.400"/><rect x="4.800" y="4.800" width="2.400" height="2.400"/><rect x="2.400" y="7.200" width="2.400" height="2.400"/><rect x="7.200" y="7.200" width="2.400" height="2.400"/></g></svg>
<svg style="left:33.40px;top:54.30px" width="8" height="8" viewBox="0 0 12 12"><path d="M10.800 1L6.400 6.200" stroke="#d2d2d2" stroke-width="1.700" stroke-linecap="round"/><path d="M6.200 5.800c-1.300-.2-2.300.7-2.500 2-.1.900-.8 1.600-1.700 1.700 1.500 1.200 4 .6 5-.9.600-1 .400-2.100-.800-2.800z" fill="#d2d2d2"/></svg>
<svg style="left:46.30px;top:54.30px" width="8" height="8" viewBox="0 0 12 12"><g fill="#d2d2d2"><path d="M6 0.600L7.900 3H6.700V5.300H9V4.100L11.400 6 9 7.900V6.700H6.700V9H7.900L6 11.400 4.100 9H5.300V6.700H3V7.900L0.600 6 3 4.100V5.300H5.300V3H4.100z"/></g></svg>
<svg style="left:59.00px;top:54.30px" width="8" height="8" viewBox="0 0 12 12"><path d="M3 0.800V9H11.200M0.800 3H9V11.200" fill="none" stroke="#d2d2d2" stroke-width="1.100"/><path d="M9 3L11 1" stroke="#d2d2d2" stroke-width="0.900"/></svg>
<svg style="left:71.80px;top:54.30px" width="8" height="8" viewBox="0 0 12 12"><rect x="1.800" y="5" width="8.400" height="6.200" rx="0.600" fill="#d2d2d2"/><path d="M3.600 5V3.400a2.400 2.400 0 0 1 4.800 0V5" fill="none" stroke="#d2d2d2" stroke-width="1.300"/><rect x="5.300" y="6.800" width="1.400" height="2.400" fill="#323232"/></svg>
<div class="t pt" style="left:92.200px;top:55.800px;color:#777">Fill:</div>
<div class="abs" style="left:104px;top:53.300px;width:19.400px;height:10px;background:#2a2a2a;border-radius:1px"></div>
<div class="t pt" style="left:107px;top:55.800px;color:#777">100%</div>
<div class="abs" style="left:124.600px;top:53.300px;width:7.400px;height:10px;background:#2a2a2a;border-radius:1px"></div>
<svg style="left:126.300px;top:57.200px" width="4" height="3" viewBox="0 0 4 3"><path d="M0.300 0.500L2 2.200 3.700 0.500" stroke="#555" stroke-width="0.700" fill="none"/></svg>
<div class="abs" style="left:0;top:67.400px;width:16px;height:23.700px;background:#2f2f2f"></div>
<div class="abs" style="left:16px;top:67.400px;width:109.700px;height:23.700px;background:#494949"></div>
<svg style="left:4.200px;top:76.500px" width="8" height="6" viewBox="0 0 8 6"><path d="M0.200 3C1.800 0.400 6.200 0.400 7.800 3 6.200 5.600 1.800 5.600 0.200 3z" fill="#f4f4f4"/><circle cx="4" cy="3" r="1.300" fill="#303030"/></svg>
<div class="abs" style="left:19.600px;top:70.600px;width:17.600px;height:17px;background:#fff"></div>
<div class="t" style="left:43px;top:76.400px;font-size:5.500px;font-style:italic;font-weight:bold;color:#f0f0f0">Background</div>
<svg style="left:109.55px;top:75.75px" width="7.5" height="7.5" viewBox="0 0 12 12"><rect x="1.800" y="5" width="8.400" height="6.200" rx="0.600" fill="none" stroke="#d8d8d8" stroke-width="1.300"/><path d="M3.600 5V3.400a2.400 2.400 0 0 1 4.800 0V5" fill="none" stroke="#d8d8d8" stroke-width="1.300"/><rect x="5.300" y="7" width="1.400" height="2.400" fill="#d8d8d8"/></svg>
<div class="abs" style="left:125.700px;top:67.600px;width:9.300px;height:130px;background:#272727"></div>
</div>
</div>
<div class="t" style="left:759px;top:419px;font-size:6.4px;color:#0c0c0c">wtvid.com</div>
</body></html>
